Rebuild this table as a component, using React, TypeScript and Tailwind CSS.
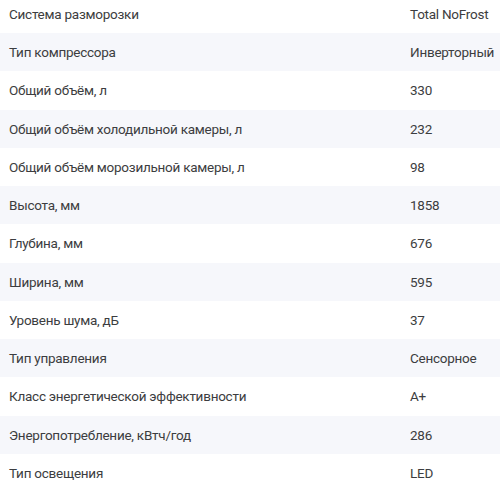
const specs: [string, string][] = [
  ["Система разморозки", "Total NoFrost"],
  ["Тип компрессора", "Инверторный"],
  ["Общий объём, л", "330"],
  ["Общий объём холодильной камеры, л", "232"],
  ["Общий объём морозильной камеры, л", "98"],
  ["Высота, мм", "1858"],
  ["Глубина, мм", "676"],
  ["Ширина, мм", "595"],
  ["Уровень шума, дБ", "37"],
  ["Тип управления", "Сенсорное"],
  ["Класс энергетической эффективности", "A+"],
  ["Энергопотребление, кВтч/год", "286"],
  ["Тип освещения", "LED"],
]

export default function App() {
  return (
    <div className="h-[493px] w-[500px] overflow-hidden bg-white font-['Roboto',sans-serif] text-[13.5px] tracking-[-0.25px] text-[#3c3d40]">
      <div className="mt-[-5.25px]">
        {specs.map(([name, value], i) => (
          <div
            key={name}
            className={`flex h-[38.25px] items-center ${i % 2 === 1 ? "bg-[#f6f7fb]" : "bg-white"}`}
          >
            <span className="w-[410px] shrink-0 pl-[9px]">{name}</span>
            <span className="whitespace-nowrap">{value}</span>
          </div>
        ))}
      </div>
    </div>
  )
}
